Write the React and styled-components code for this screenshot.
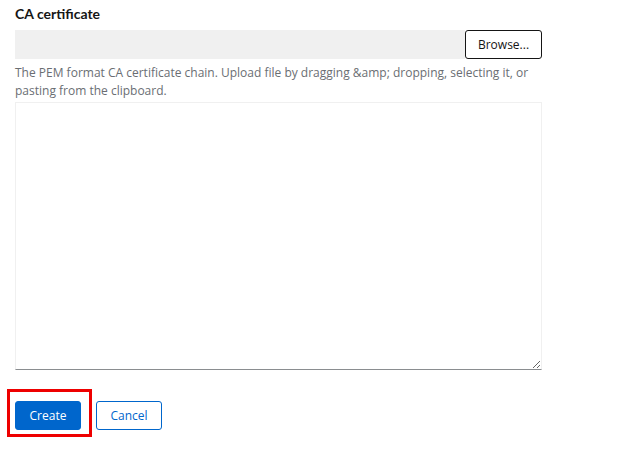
import React from "react";
import styled, { createGlobalStyle } from "styled-components";

const Global = createGlobalStyle`
  html, body { margin: 0; padding: 0; background: #fff; }
  body { font-family: "Open Sans", "Liberation Sans", sans-serif; color: #151515; }
  * { box-sizing: border-box; }
`;

const Page = styled.div`
  padding: 4px 0 0 15px;
  width: 557px;
`;

const FormGroup = styled.div`
  display: flex;
  flex-direction: column;
`;

const Label = styled.label`
  font-family: Lato, "Open Sans", sans-serif;
  font-size: 14px;
  font-weight: 700;
  line-height: 20px;
  margin-bottom: 6px;
`;

const UploadRow = styled.div`
  display: flex;
  width: 527px;
  height: 29px;
`;

const FileName = styled.div`
  flex: 1;
  background: #f0f0f0;
`;

const BrowseButton = styled.button`
  width: 77px;
  height: 29px;
  border: 1px solid #151515;
  border-radius: 3px;
  background: #fff;
  font-family: inherit;
  font-size: 12px;
  color: #151515;
  padding: 0;
`;

const Helper = styled.div`
  margin-top: 5px;
  font-size: 12px;
  line-height: 18px;
  color: #6a6e73;
  width: 540px;
`;

const TextArea = styled.textarea`
  display: block;
  margin-top: 2px;
  width: 527px;
  height: 268px;
  border: 1px solid #f0f0f0;
  border-bottom-color: #8a8d90;
  resize: vertical;
  font-family: inherit;
  outline: none;
`;

const Actions = styled.div`
  display: flex;
  align-items: flex-start;
  margin-top: 19px;
`;

const Highlight = styled.div`
  display: flex;
  margin-left: -8px;
  padding: 9px 8px 4px 5px;
  border: 3px solid #ee0000;
`;

const Button = styled.button`
  width: 66px;
  height: 29px;
  margin-top: ${(p) => p.$offset || 0}px;
  margin-left: ${(p) => p.$gap || 0}px;
  padding: 0;
  border-radius: 3px;
  font-family: inherit;
  font-size: 12px;
  border: 1px solid #0066cc;
  background: ${(p) => (p.$primary ? "#0066cc" : "#fff")};
  color: ${(p) => (p.$primary ? "#fff" : "#0066cc")};
`;

export default function App() {
  return (
    <>
      <Global />
      <Page>
        <FormGroup>
          <Label>CA certificate</Label>
          <UploadRow>
            <FileName />
            <BrowseButton>Browse...</BrowseButton>
          </UploadRow>
          <Helper>
            The PEM format CA certificate chain. Upload file by dragging &amp;amp; dropping, selecting it, or pasting from the clipboard.
          </Helper>
          <TextArea />
        </FormGroup>
        <Actions>
          <Highlight>
            <Button $primary>Create</Button>
          </Highlight>
          <Button $offset={12} $gap={4}>Cancel</Button>
        </Actions>
      </Page>
    </>
  );
}
